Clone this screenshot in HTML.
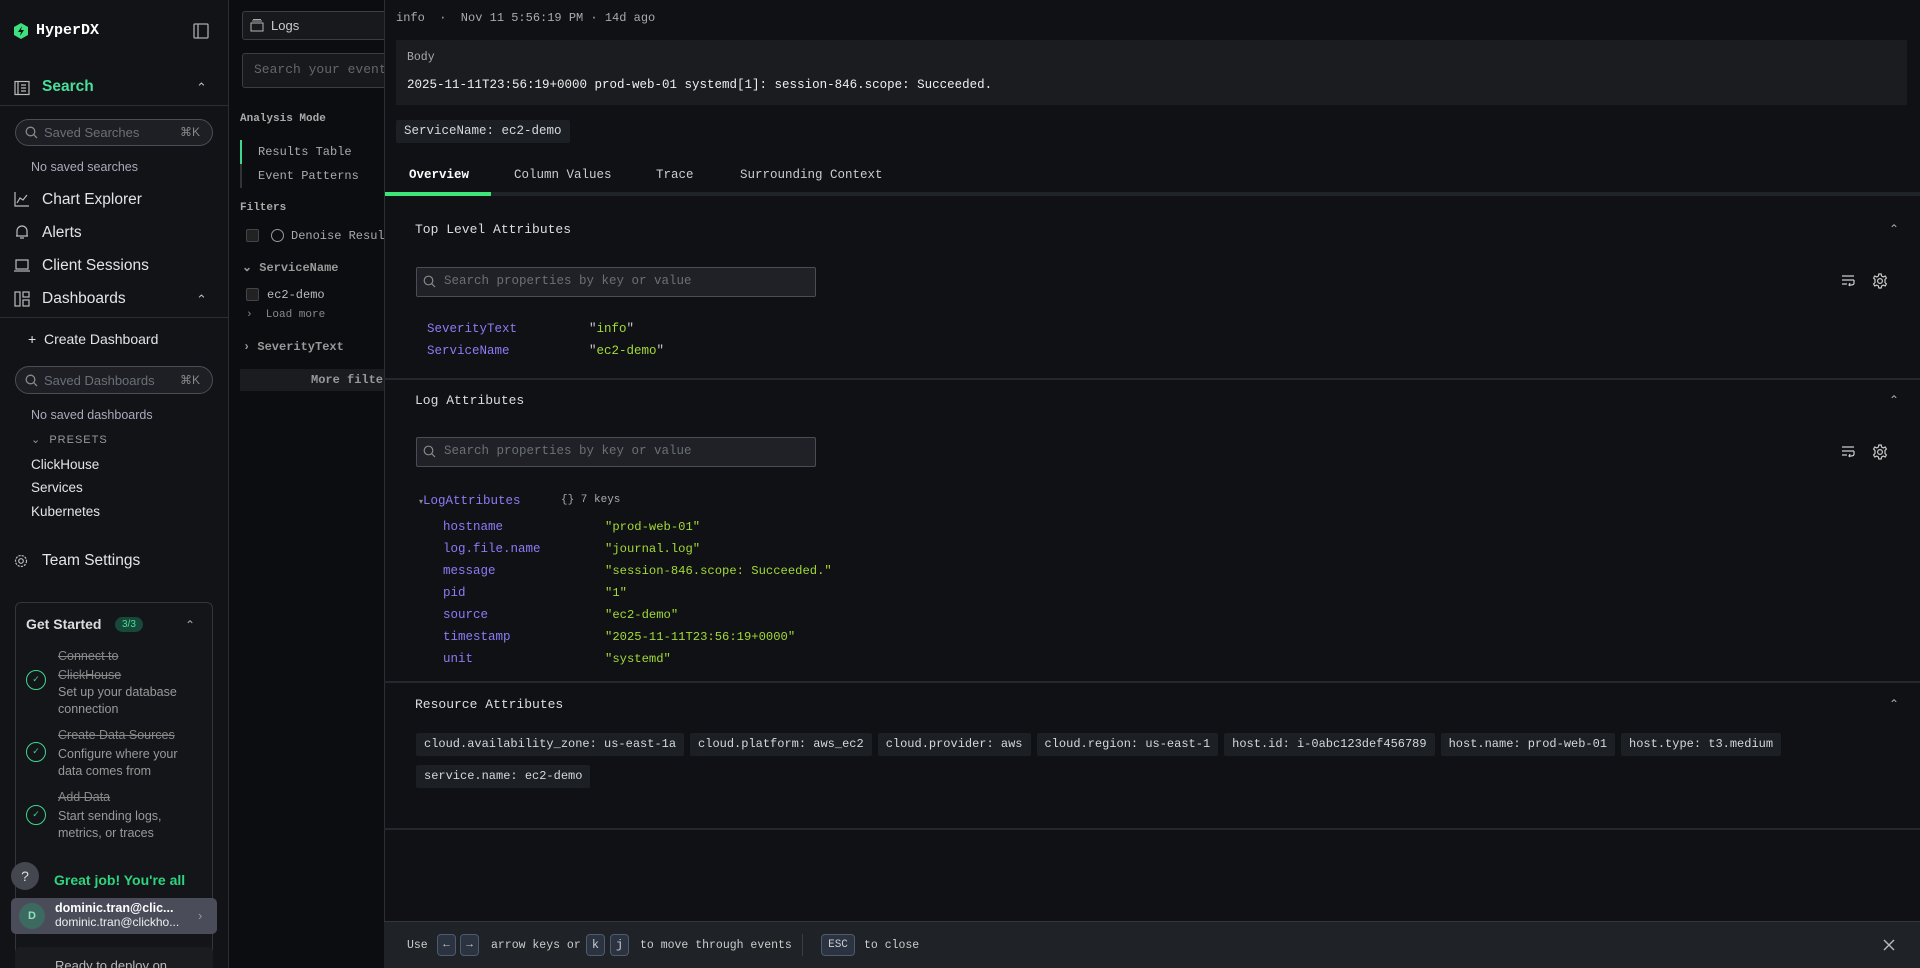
<!DOCTYPE html>
<html style="overflow:hidden;height:968px"><head><meta charset="utf-8"><style>
*{box-sizing:border-box;margin:0;padding:0}
body{width:1920px;height:968px;overflow:hidden;background:#0f1115;font-family:"Liberation Sans",sans-serif;color:#d6d8dc;position:relative}
.a{position:absolute;white-space:nowrap}
.m{font-family:"Liberation Mono",monospace}
#side{left:0;top:0;width:229px;height:968px;background:#111317;border-right:1px solid #2a2d33;overflow:hidden}
#mid{left:229px;top:0;width:155px;height:968px;background:#0c0d10;overflow:hidden}
#drawer{left:384px;top:0;width:1536px;height:968px;background:#0f1115;border-left:1px solid #2c2f35}
.nav{font-size:15.5px;color:#e2e4e8}
.inp{border:1px solid #4a4d55;background:#1d1f24;border-radius:20px}
.ph{color:#6b6f78;font-size:13px}
.key{color:#8b7cf6}
.val{color:#a3d936}
.chip{background:#1c1f24;color:#d6d8dc;font-size:12px;padding:0 8px;height:23px;line-height:23px;border-radius:2px}
.sinp{background:#1f2126;border:1px solid #4a4d55;border-radius:2px;width:400px;height:30px}
.kbd{border:1px solid #4e5a6e;border-radius:4px;background:#2b3240;color:#c8ccd4;height:22px;line-height:20px;text-align:center;font-size:11px}
.hr{height:2px;background:#24272c;left:384px;width:1536px}
</style></head><body>
<div id="side" class="a">
 <svg class="a" style="left:14px;top:23px" width="14" height="16" viewBox="0 0 14 16"><path d="M7 0L14 4V12L7 16L0 12V4Z" fill="#3fe07f"/><path d="M8 3L4 9H7L6 13L10 7H7Z" fill="#111317"/></svg>
 <div class="a m" style="left:36px;top:22px;font-size:15px;font-weight:bold;color:#fff">HyperDX</div>
 <svg class="a" style="left:193px;top:23px" width="16" height="16" viewBox="0 0 16 16" fill="none" stroke="#aaa" stroke-width="1.3"><rect x="1" y="1" width="14" height="14" rx="1"/><path d="M5 1V15"/></svg>
 <svg class="a" style="left:14px;top:80px" width="16" height="16" viewBox="0 0 16 16" fill="none" stroke="#bbb" stroke-width="1.2"><rect x="1" y="1.5" width="14" height="13"/><path d="M4 1.5V14.5M7 5H12M7 8H12M7 11H12"/></svg>
 <div class="a" style="left:42px;top:78px;font-size:15.5px;font-weight:bold;color:#4ade9a">Search</div>
 <div class="a" style="left:196px;top:80px;color:#bbb;font-size:13px">&#8963;</div>
 <div class="a" style="left:0;top:105px;width:229px;height:1px;background:#2a2d33"></div>
 <div class="a inp" style="left:15px;top:119px;width:198px;height:27px"></div>
 <svg class="a" style="left:25px;top:126px" width="13" height="13" viewBox="0 0 13 13" fill="none" stroke="#888" stroke-width="1.3"><circle cx="5.5" cy="5.5" r="4.3"/><path d="M8.7 8.7L12 12"/></svg>
 <div class="a ph" style="left:44px;top:125px">Saved Searches</div>
 <div class="a" style="left:180px;top:125px;font-size:12px;color:#888">⌘K</div>
 <div class="a" style="left:31px;top:160px;font-size:12.5px;color:#aab">No saved searches</div>
 <svg class="a" style="left:14px;top:192px" width="16" height="15" viewBox="0 0 16 15" fill="none" stroke="#bbb" stroke-width="1.2"><path d="M1 0V14H15M3 11L6 6L9 8L13 3"/></svg>
 <div class="a nav" style="left:42px;top:191px">Chart Explorer</div>
 <svg class="a" style="left:15px;top:224px" width="14" height="16" viewBox="0 0 14 16" fill="none" stroke="#bbb" stroke-width="1.2"><path d="M2 12V7A5 5 0 0 1 12 7V12H1H13M5 14H9"/></svg>
 <div class="a nav" style="left:42px;top:224px">Alerts</div>
 <svg class="a" style="left:14px;top:259px" width="16" height="13" viewBox="0 0 16 13" fill="none" stroke="#bbb" stroke-width="1.2"><rect x="2" y="1" width="12" height="9"/><path d="M0 12H16"/></svg>
 <div class="a nav" style="left:42px;top:257px">Client Sessions</div>
 <svg class="a" style="left:14px;top:291px" width="16" height="16" viewBox="0 0 16 16" fill="none" stroke="#bbb" stroke-width="1.2"><rect x="1" y="1" width="5" height="14"/><rect x="9" y="1" width="6" height="5"/><rect x="9" y="9" width="6" height="6"/></svg>
 <div class="a nav" style="left:42px;top:290px">Dashboards</div>
 <div class="a" style="left:196px;top:292px;color:#bbb;font-size:13px">&#8963;</div>
 <div class="a" style="left:0;top:317px;width:229px;height:1px;background:#2a2d33"></div>
 <div class="a" style="left:28px;top:331px;font-size:14px;color:#e2e4e8">+ &nbsp;Create Dashboard</div>
 <div class="a inp" style="left:15px;top:366px;width:198px;height:28px"></div>
 <svg class="a" style="left:25px;top:374px" width="13" height="13" viewBox="0 0 13 13" fill="none" stroke="#888" stroke-width="1.3"><circle cx="5.5" cy="5.5" r="4.3"/><path d="M8.7 8.7L12 12"/></svg>
 <div class="a ph" style="left:44px;top:373px">Saved Dashboards</div>
 <div class="a" style="left:180px;top:373px;font-size:12px;color:#888">⌘K</div>
 <div class="a" style="left:31px;top:408px;font-size:12.5px;color:#aab">No saved dashboards</div>
 <div class="a" style="left:31px;top:433px;font-size:11px;color:#999;letter-spacing:1px">⌄ &nbsp;PRESETS</div>
 <div class="a" style="left:31px;top:457px;font-size:13.5px;color:#e2e4e8">ClickHouse</div>
 <div class="a" style="left:31px;top:480px;font-size:13.5px;color:#e2e4e8">Services</div>
 <div class="a" style="left:31px;top:504px;font-size:13.5px;color:#e2e4e8">Kubernetes</div>
 <svg class="a" style="left:14px;top:554px" width="14" height="14" viewBox="0 0 14 14" fill="none" stroke="#bbb" stroke-width="1.2"><circle cx="7" cy="7" r="2.3"/><circle cx="7" cy="7" r="5.5" stroke-dasharray="2.2 1.1"/></svg>
 <div class="a nav" style="left:42px;top:552px">Team Settings</div>
 <div class="a" style="left:15px;top:602px;width:198px;height:380px;border:1px solid #32353b;border-radius:6px;background:#131519"></div>
 <div class="a" style="left:26px;top:616px;font-size:14px;font-weight:bold;color:#ddd">Get Started</div>
 <div class="a" style="left:115px;top:617px;background:#17493a;color:#4ade9a;font-size:10px;padding:2px 7px;border-radius:9px">3/3</div>
 <div class="a" style="left:185px;top:618px;color:#aaa;font-size:12px">&#8963;</div>
 <div class="a" style="left:58px;top:647px;font-size:12.5px;color:#888;line-height:19px;text-decoration:line-through">Connect to<br>ClickHouse</div>
 <div class="a" style="left:58px;top:684px;font-size:12.5px;color:#999;line-height:17px">Set up your database<br>connection</div>
 <div class="a" style="left:26px;top:670px;width:20px;height:20px;border:1.5px solid #3fd68f;border-radius:50%;color:#3fd68f;font-size:9px;text-align:center;line-height:17px">✓</div>
 <div class="a" style="left:58px;top:728px;font-size:12.5px;color:#888;text-decoration:line-through">Create Data Sources</div>
 <div class="a" style="left:58px;top:746px;font-size:12.5px;color:#999;line-height:17px">Configure where your<br>data comes from</div>
 <div class="a" style="left:26px;top:742px;width:20px;height:20px;border:1.5px solid #3fd68f;border-radius:50%;color:#3fd68f;font-size:9px;text-align:center;line-height:17px">✓</div>
 <div class="a" style="left:58px;top:790px;font-size:12.5px;color:#888;text-decoration:line-through">Add Data</div>
 <div class="a" style="left:58px;top:808px;font-size:12.5px;color:#999;line-height:17px">Start sending logs,<br>metrics, or traces</div>
 <div class="a" style="left:26px;top:805px;width:20px;height:20px;border:1.5px solid #3fd68f;border-radius:50%;color:#3fd68f;font-size:9px;text-align:center;line-height:17px">✓</div>
 <div class="a" style="left:54px;top:872px;font-size:14px;font-weight:bold;color:#2ed47f">Great job! You're all</div>
 <div class="a" style="left:11px;top:862px;width:28px;height:28px;border-radius:50%;background:#44474f;color:#ddd;text-align:center;line-height:28px;font-size:14px">?</div>
 <div class="a" style="left:11px;top:898px;width:206px;height:36px;background:#4a4c5a;border-radius:5px"></div>
 <div class="a" style="left:19px;top:903px;width:26px;height:26px;border-radius:50%;background:#3c6a60;color:#8fe0c0;font-size:11px;font-weight:bold;text-align:center;line-height:26px">D</div>
 <div class="a" style="left:55px;top:901px;font-size:12.5px;font-weight:bold;color:#fff">dominic.tran@clic...</div>
 <div class="a" style="left:55px;top:915px;font-size:12px;color:#eee">dominic.tran@clickho...</div>
 <div class="a" style="left:198px;top:908px;font-size:13px;color:#999">›</div>
 <div class="a" style="left:15px;top:947px;width:198px;height:30px;background:#1a1c20;border-radius:5px"></div>
 <div class="a" style="left:55px;top:958px;font-size:13px;color:#bbb">Ready to deploy on</div>
</div>
<div id="mid" class="a">
 <div class="a" style="left:13px;top:11px;width:160px;height:29px;border:1px solid #3a3d44;border-radius:3px;background:#17191d"></div>
 <svg class="a" style="left:21px;top:19px" width="14" height="13" viewBox="0 0 14 13" fill="none" stroke="#aaa" stroke-width="1.1"><rect x="1" y="4" width="12" height="8"/><path d="M2 2H12M3 0.5H11"/></svg>
 <div class="a" style="left:42px;top:18px;font-size:13px;color:#ccc">Logs</div>
 <div class="a" style="left:13px;top:53px;width:160px;height:35px;border:1px solid #3a3d44;border-radius:3px;background:#17191d"></div>
 <div class="a m" style="left:25px;top:62px;font-size:13px;color:#666">Search your events</div>
 <div class="a m" style="left:11px;top:113px;font-size:11px;font-weight:bold;color:#aaa">Analysis Mode</div>
 <div class="a" style="left:11px;top:140px;width:2px;height:24px;background:#3fd68f"></div>
 <div class="a" style="left:11px;top:164px;width:2px;height:24px;background:#333"></div>
 <div class="a m" style="left:29px;top:145px;font-size:12px;color:#aaa">Results Table</div>
 <div class="a m" style="left:29px;top:169px;font-size:12px;color:#aaa">Event Patterns</div>
 <div class="a m" style="left:11px;top:202px;font-size:11px;font-weight:bold;color:#aaa">Filters</div>
 <div class="a" style="left:17px;top:229px;width:13px;height:13px;border:1px solid #444;background:#222;border-radius:2px"></div>
 <div class="a" style="left:42px;top:229px;width:13px;height:13px;border:1.2px solid #999;border-radius:50%"></div>
 <div class="a m" style="left:62px;top:229px;font-size:12px;color:#aaa">Denoise Results</div>
 <div class="a m" style="left:13px;top:260px;font-size:12px;font-weight:bold;color:#999">⌄ ServiceName</div>
 <div class="a" style="left:17px;top:288px;width:13px;height:13px;border:1px solid #444;background:#222;border-radius:2px"></div>
 <div class="a m" style="left:38px;top:288px;font-size:12px;color:#bbb">ec2-demo</div>
 <div class="a m" style="left:17px;top:309px;font-size:11px;color:#888">› &nbsp;Load more</div>
 <div class="a m" style="left:14px;top:340px;font-size:12px;font-weight:bold;color:#999">› SeverityText</div>
 <div class="a" style="left:11px;top:369px;width:150px;height:22px;background:#1a1c20"></div>
 <div class="a m" style="left:82px;top:373px;font-size:12px;font-weight:bold;color:#999">More filters</div>
</div>
<div id="drawer" class="a m">
 <div class="a" style="left:11px;top:11px;font-size:12px;color:#aaa">info &nbsp;·&nbsp; Nov 11 5:56:19 PM · 14d ago</div>
 <div class="a" style="left:11px;top:40px;width:1511px;height:65px;background:#1a1c20"></div>
 <div class="a" style="left:22px;top:51px;font-size:11.5px;color:#aaa">Body</div>
 <div class="a" style="left:22px;top:78px;font-size:12.5px;color:#eee">2025-11-11T23:56:19+0000 prod-web-01 systemd[1]: session-846.scope: Succeeded.</div>
 <div class="a chip" style="left:11px;top:120px;height:23px;font-size:12.5px;line-height:23px">ServiceName: ec2-demo</div>
 <div class="a" style="left:24px;top:168px;font-size:12.5px;font-weight:bold;color:#fff">Overview</div>
 <div class="a" style="left:129px;top:168px;font-size:12.5px;color:#ccc">Column Values</div>
 <div class="a" style="left:271px;top:168px;font-size:12.5px;color:#ccc">Trace</div>
 <div class="a" style="left:355px;top:168px;font-size:12.5px;color:#ccc">Surrounding Context</div>
 <div class="a" style="left:0;top:192px;width:1536px;height:4px;background:#1f2429"></div>
 <div class="a" style="left:0;top:192px;width:106px;height:4px;background:#3ee67a"></div>
</div>
<div class="a m" style="left:415px;top:222px;font-size:13px;color:#ddd">Top Level Attributes</div>
<div class="a" style="left:1889px;top:222px;color:#aaa;font-size:12px">&#8963;</div>
<div class="a sinp" style="left:416px;top:267px"></div>
<svg class="a" style="left:423px;top:275px" width="13" height="13" viewBox="0 0 13 13" fill="none" stroke="#888" stroke-width="1.2"><circle cx="5.5" cy="5.5" r="4.3"/><path d="M8.7 8.7L12 12"/></svg>
<div class="a m ph" style="left:444px;top:274px;font-size:12.5px">Search properties by key or value</div>
<svg class="a" style="left:1842px;top:275px" width="13" height="12" viewBox="0 0 13 12" fill="none" stroke="#ccc" stroke-width="1.2"><path d="M0 1H12M0 5H12M0 9H5M12 5V8Q12 10 9 10H7M8 8L7 10L8 11"/></svg>
<svg class="a" style="left:1872px;top:273px" width="16" height="16" viewBox="0 0 16 16" fill="none" stroke="#ccc" stroke-width="1.2"><circle cx="8" cy="8" r="2.4"/><path d="M6.8 1H9.2L9.6 3L11.3 3.9L13.2 3L14.4 5L13 6.5V9.5L14.4 11L13.2 13L11.3 12.1L9.6 13L9.2 15H6.8L6.4 13L4.7 12.1L2.8 13L1.6 11L3 9.5V6.5L1.6 5L2.8 3L4.7 3.9L6.4 3Z"/></svg>
<div class="a m key" style="left:427px;top:322px;font-size:12.5px">SeverityText</div>
<div class="a m val" style="left:589px;top:322px;font-size:12.5px"><span style="color:#ccc">"</span>info<span style="color:#ccc">"</span></div>
<div class="a m key" style="left:427px;top:344px;font-size:12.5px">ServiceName</div>
<div class="a m val" style="left:589px;top:344px;font-size:12.5px"><span style="color:#ccc">"</span>ec2-demo<span style="color:#ccc">"</span></div>
<div class="a hr" style="top:378px"></div>

<div class="a m" style="left:415px;top:393px;font-size:13px;color:#ddd">Log Attributes</div>
<div class="a" style="left:1889px;top:393px;color:#aaa;font-size:12px">&#8963;</div>
<div class="a sinp" style="left:416px;top:437px"></div>
<svg class="a" style="left:423px;top:445px" width="13" height="13" viewBox="0 0 13 13" fill="none" stroke="#888" stroke-width="1.2"><circle cx="5.5" cy="5.5" r="4.3"/><path d="M8.7 8.7L12 12"/></svg>
<div class="a m ph" style="left:444px;top:444px;font-size:12.5px">Search properties by key or value</div>
<svg class="a" style="left:1842px;top:446px" width="13" height="12" viewBox="0 0 13 12" fill="none" stroke="#ccc" stroke-width="1.2"><path d="M0 1H12M0 5H12M0 9H5M12 5V8Q12 10 9 10H7M8 8L7 10L8 11"/></svg>
<svg class="a" style="left:1872px;top:444px" width="16" height="16" viewBox="0 0 16 16" fill="none" stroke="#ccc" stroke-width="1.2"><circle cx="8" cy="8" r="2.4"/><path d="M6.8 1H9.2L9.6 3L11.3 3.9L13.2 3L14.4 5L13 6.5V9.5L14.4 11L13.2 13L11.3 12.1L9.6 13L9.2 15H6.8L6.4 13L4.7 12.1L2.8 13L1.6 11L3 9.5V6.5L1.6 5L2.8 3L4.7 3.9L6.4 3Z"/></svg>
<div class="a m" style="left:419px;top:494px;font-size:12.5px"><span style="color:#888;font-size:8px">▾</span><span class="key">LogAttributes</span></div>
<div class="a m" style="left:561px;top:494px;font-size:11px;color:#aaa">{} 7 keys</div>
<div class="a m" style="left:443px;top:516px;font-size:12.5px;line-height:22px"><div class="key">hostname</div><div class="key">log.file.name</div><div class="key">message</div><div class="key">pid</div><div class="key">source</div><div class="key">timestamp</div><div class="key">unit</div></div>
<div class="a m val" style="left:605px;top:516px;font-size:12.2px;line-height:22px"><div>"prod-web-01"</div><div>"journal.log"</div><div>"session-846.scope: Succeeded."</div><div>"1"</div><div>"ec2-demo"</div><div>"2025-11-11T23:56:19+0000"</div><div>"systemd"</div></div>
<div class="a hr" style="top:681px"></div>

<div class="a m" style="left:415px;top:697px;font-size:13px;color:#ddd">Resource Attributes</div>
<div class="a" style="left:1889px;top:697px;color:#aaa;font-size:12px">&#8963;</div>
<div class="a m" style="left:416px;top:733px;display:flex;gap:6px;width:1480px;flex-wrap:wrap;row-gap:9px">
<span class="chip">cloud.availability_zone: us-east-1a</span><span class="chip">cloud.platform: aws_ec2</span><span class="chip">cloud.provider: aws</span><span class="chip">cloud.region: us-east-1</span><span class="chip">host.id: i-0abc123def456789</span><span class="chip">host.name: prod-web-01</span><span class="chip">host.type: t3.medium</span><span class="chip" style="margin-right:900px">service.name: ec2-demo</span>
</div>
<div class="a hr" style="top:828px"></div>

<div class="a" style="left:384px;top:921px;width:1536px;height:47px;background:#1f2226;border-top:1px solid #33363c"></div>
<div class="a m" style="left:407px;top:939px;font-size:11.5px;color:#ccc">Use</div>
<div class="a kbd m" style="left:437px;top:934px;width:19px">←</div>
<div class="a kbd m" style="left:460px;top:934px;width:19px">→</div>
<div class="a m" style="left:491px;top:939px;font-size:11.5px;color:#ccc">arrow keys or</div>
<div class="a kbd m" style="left:586px;top:934px;width:19px;font-size:12px">k</div>
<div class="a kbd m" style="left:610px;top:934px;width:19px;font-size:12px">j</div>
<div class="a m" style="left:640px;top:939px;font-size:11.5px;color:#ccc">to move through events</div>
<div class="a" style="left:802px;top:934px;width:1px;height:22px;background:#3a3d44"></div>
<div class="a kbd m" style="left:821px;top:934px;width:34px">ESC</div>
<div class="a m" style="left:864px;top:939px;font-size:11.5px;color:#ccc">to close</div>
<svg class="a" style="left:1883px;top:939px" width="12" height="12" viewBox="0 0 12 12" stroke="#bbb" stroke-width="1.4"><path d="M1 1L11 11M11 1L1 11"/></svg>
</body></html>
